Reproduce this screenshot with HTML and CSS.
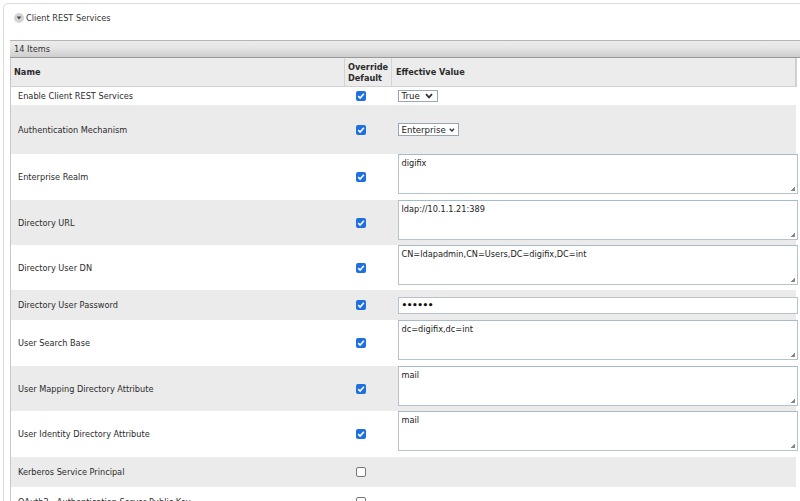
FILE: index.html
```html
<!DOCTYPE html>
<html>
<head>
<meta charset="utf-8">
<link rel="stylesheet" href="styles.css">
</head>
<body>
<div class="panel">
  <div class="panel-title"><span class="toggle"><svg width="10" height="10" viewBox="0 0 10 10"><circle cx="5" cy="5" r="5" fill="#d4d4d4"/><path d="M2.6 3.6 L7.4 3.6 L5 6.6 Z" fill="#4a4a4a"/></svg></span>Client REST Services</div>
  <div class="grid">
    <div class="count">14 Items</div>
    <table class="props">
      <colgroup><col class="c-name"><col class="c-ovr"><col class="c-val"></colgroup>
      <thead>
        <tr><th class="h-name">Name</th><th class="h-ovr">Override<br>Default</th><th class="h-val">Effective Value</th></tr>
      </thead>
      <tbody>
        <tr class="r-sel odd"><td class="name">Enable Client REST Services</td><td class="ovr"><span class="cb on"></span></td><td class="val"><span class="sel s-true">True<svg class="chev" width="8" height="6" viewBox="0 0 8 6"><path d="M1 1.2 L4 4.4 L7 1.2" fill="none" stroke="#333" stroke-width="1.8"/></svg></span></td></tr>
        <tr class="r-big even"><td class="name">Authentication Mechanism</td><td class="ovr"><span class="cb on"></span></td><td class="val"><span class="sel s-ent">Enterprise<svg class="chev" width="8" height="6" viewBox="0 0 8 6"><path d="M1 1.2 L4 4.4 L7 1.2" fill="none" stroke="#333" stroke-width="1.8"/></svg></span></td></tr>
        <tr class="h46 odd"><td class="name">Enterprise Realm</td><td class="ovr"><span class="cb on"></span></td><td class="val top"><div class="ta">digifix<span class="grip"></span></div></td></tr>
        <tr class="h45 even"><td class="name">Directory URL</td><td class="ovr"><span class="cb on"></span></td><td class="val top"><div class="ta">ldap://10.1.1.21:389<span class="grip"></span></div></td></tr>
        <tr class="h45 odd"><td class="name">Directory User DN</td><td class="ovr"><span class="cb on"></span></td><td class="val top"><div class="ta">CN=ldapadmin,CN=Users,DC=digifix,DC=int<span class="grip"></span></div></td></tr>
        <tr class="r-pw even"><td class="name">Directory User Password</td><td class="ovr"><span class="cb on"></span></td><td class="val"><div class="pw">&#8226;&#8226;&#8226;&#8226;&#8226;&#8226;</div></td></tr>
        <tr class="h46 odd"><td class="name">User Search Base</td><td class="ovr"><span class="cb on"></span></td><td class="val top"><div class="ta">dc=digifix,dc=int<span class="grip"></span></div></td></tr>
        <tr class="h45 even"><td class="name">User Mapping Directory Attribute</td><td class="ovr"><span class="cb on"></span></td><td class="val top"><div class="ta">mail<span class="grip"></span></div></td></tr>
        <tr class="h46 odd"><td class="name">User Identity Directory Attribute</td><td class="ovr"><span class="cb on"></span></td><td class="val top"><div class="ta">mail<span class="grip"></span></div></td></tr>
        <tr class="r-empty even"><td class="name">Kerberos Service Principal</td><td class="ovr"><span class="cb"></span></td><td class="val"></td></tr>
        <tr class="r-empty odd"><td class="name">OAuth2 - Authentication Server Public Key</td><td class="ovr"><span class="cb"></span></td><td class="val"></td></tr>
      </tbody>
    </table>
  </div>
</div>
</body>
</html>
```
FILE: styles.css
```css
html, body {
  margin: 0;
  padding: 0;
  background: #fff;
  overflow: hidden;
}
body {
  font-family: "DejaVu Sans", Verdana, sans-serif;
  font-size: 8.2px;
  color: #2b2b2b;
  width: 800px;
  height: 501px;
}
.panel {
  margin: 3px 0 0 3px;
  width: 830px;
  border: 1px solid #dcdcdc;
  border-radius: 5px;
  height: 600px;
}
.panel-title {
  display: flex;
  align-items: center;
  height: 27px;
  padding: 0 0 0 10px;
  color: #333;
}
.toggle {
  display: inline-flex;
  width: 10px;
  height: 10px;
  margin-right: 2px;
}
.grid {
  margin: 9px 0 0 6px;
  width: 800px;
}
.count {
  height: 16px;
  line-height: 17px;
  padding-left: 4px;
  border-top: 1px solid #b4b4b4;
  border-bottom: 1px solid #9a9a9a;
  background: linear-gradient(#ededed, #e4e4e4 45%, #cdcdcd);
  color: #333;
}
.props {
  border-collapse: collapse;
  table-layout: fixed;
  width: 787px;
  border-left: 1px solid #c8c8c8;
}
.c-name { width: 334px; }
.c-ovr { width: 47px; }
.props th {
  background: #ececec;
  text-align: left;
  font-weight: bold;
  height: 27px;
  padding: 0 0 0 3px;
  border-right: 1px solid #d4d4d4;
  border-bottom: 1px solid #d0d0d0;
  line-height: 11px;
  vertical-align: middle;
}
.props th.h-val { border-right: 2px solid #d0d0d0; padding-left: 4px; }
.props th.h-ovr { padding-top: 1px; }
.props td {
  padding: 0;
  vertical-align: middle;
}
.props td.name { padding-left: 7px; }
.props td.ovr { padding-left: 11px; }
.props td.val { padding-left: 6px; }
.props td.top { vertical-align: top; padding-top: 0; }
.odd td { background: #fff; }
.even td { background: #ebebeb; }
.r-sel td { height: 18px; }
.r-big td { height: 49px; }
.h45 td { height: 45px; }
.h46 td { height: 46px; }
.r-pw td { height: 30px; }
.r-empty td { height: 30px; }
.cb {
  display: block;
  width: 10px;
  height: 10px;
  box-sizing: border-box;
  border-radius: 2px;
  border: 1px solid #767676;
  background: #fff;
}
.cb.on {
  border: none;
  background: #1e6fe0 url("data:image/svg+xml,%3Csvg xmlns='http://www.w3.org/2000/svg' width='10' height='10' viewBox='0 0 10 10'%3E%3Cpath d='M2.2 5.2 L4.1 7 L7.9 2.8' fill='none' stroke='white' stroke-width='1.6'/%3E%3C/svg%3E") no-repeat center;
}
.sel {
  display: inline-flex;
  align-items: center;
  box-sizing: border-box;
  height: 12px;
  border: 1px solid #9aa6b2;
  background: #fff;
  padding: 0 3px 0 3px;
  color: #222;
  font-size: 8.6px;
  gap: 5px;
}
.s-true { width: 40px; }
.s-ent { width: 61px; height: 13px; gap: 3px; }
.chev { display: block; }
.ta {
  position: relative;
  box-sizing: border-box;
  width: 400px;
  height: 40px;
  border: 1px solid #b7c3cc;
  border-top-color: #a6bccb;
  background: #fff;
  padding: 3px 3px;
  line-height: 10px;
  color: #222;
}
.grip {
  position: absolute;
  right: 2px;
  bottom: 2px;
  width: 4px;
  height: 4px;
  background: linear-gradient(135deg, transparent 50%, #888 50%);
}
.pw {
  box-sizing: border-box;
  width: 400px;
  height: 17px;
  border: 1px solid #b7c3cc;
  background: #fff;
  padding: 0 3px;
  line-height: 15px;
  font-size: 9px;
  font-weight: bold;
  letter-spacing: -0.5px;
  color: #111;
}
```
